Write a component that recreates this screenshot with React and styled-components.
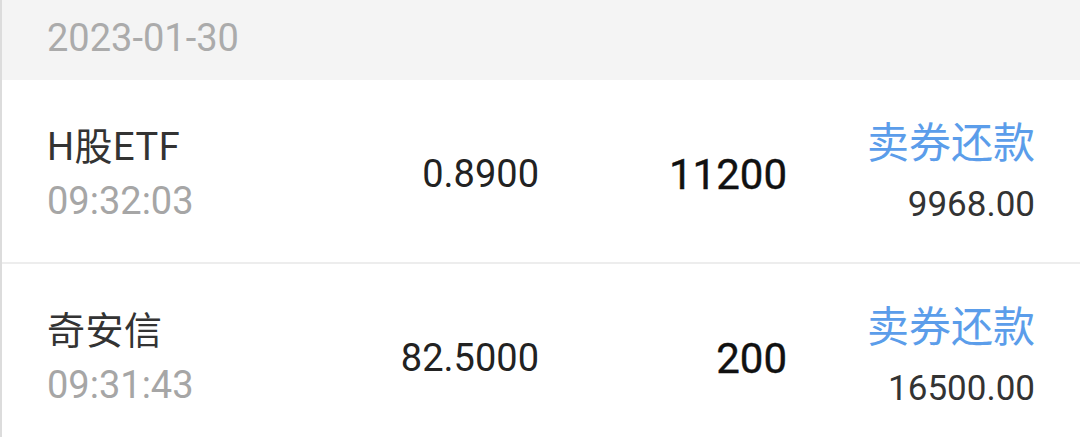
import React from "react";
import styled, { createGlobalStyle } from "styled-components";

const GlobalStyle = createGlobalStyle`
  html, body {
    margin: 0;
    padding: 0;
    background: #ffffff;
  }
  body {
    font-family: Roboto, "Noto Sans CJK SC", sans-serif;
  }
`;

const Page = styled.div`
  width: 1080px;
  height: 437px;
  overflow: hidden;
  box-sizing: border-box;
  border-left: 2px solid #dcdcdc;
  background: #ffffff;
`;

const DateBar = styled.div`
  height: 80px;
  box-sizing: border-box;
  padding: 16px 0 0 45px;
  background: #f4f4f4;
  color: #ababab;
  font-size: 38px;
  line-height: normal;
`;

const Row = styled.div`
  display: grid;
  grid-template-columns: 1fr repeat(3, 248px);
  align-items: center;
  height: 184px;
  box-sizing: border-box;
  padding: 6px 45px 0 45px;
  border-bottom: 2px solid #ededed;
`;

const Stock = styled.div`
  display: flex;
  flex-direction: column;
`;

const Name = styled.div`
  font-size: 38px;
  line-height: 54px;
  letter-spacing: 0.5px;
  color: #333333;
  white-space: nowrap;
`;

const Time = styled.div`
  font-size: 38px;
  line-height: 54px;
  color: #a6a6a6;
`;

const Price = styled.div`
  text-align: right;
  font-size: 38px;
  color: #222222;
`;

const Qty = styled.div`
  text-align: right;
  font-size: 42px;
  color: #111111;
  -webkit-text-stroke: 0.4px #111111;
`;

const Trade = styled.div`
  display: flex;
  flex-direction: column;
  align-items: flex-end;
`;

const TradeType = styled.div`
  font-size: 42px;
  line-height: 62px;
  color: ${(p) => p.color || "#5b9dea"};
`;

const Amount = styled.div`
  font-size: 35px;
  line-height: 60px;
  color: #333333;
`;

const trades = [
  { name: "H股ETF", time: "09:32:03", price: "0.8900", qty: "11200", type: "卖券还款", amount: "9968.00" },
  { name: "奇安信", time: "09:31:43", price: "82.5000", qty: "200", type: "卖券还款", amount: "16500.00" },
];

export default function App() {
  return (
    <>
      <GlobalStyle />
      <Page>
        <DateBar>2023-01-30</DateBar>
        {trades.map((t) => (
          <Row key={t.time}>
            <Stock>
              <Name>{t.name}</Name>
              <Time>{t.time}</Time>
            </Stock>
            <Price>{t.price}</Price>
            <Qty>{t.qty}</Qty>
            <Trade>
              <TradeType>{t.type}</TradeType>
              <Amount>{t.amount}</Amount>
            </Trade>
          </Row>
        ))}
      </Page>
    </>
  );
}
